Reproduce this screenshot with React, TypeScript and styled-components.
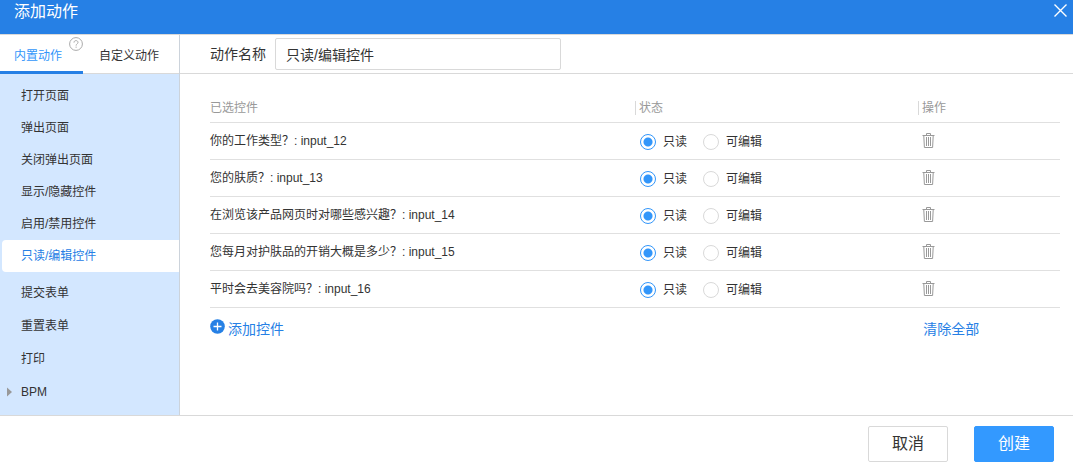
import React, { useState } from "react";
import styled, { createGlobalStyle, css } from "styled-components";

const GlobalStyle = createGlobalStyle`
  *, *::before, *::after { box-sizing: border-box; }
  body {
    margin: 0;
    background: #fff;
    color: #333;
    font: 12px/20px "Liberation Sans", "Noto Sans CJK SC", sans-serif;
  }
  button, input { font: inherit; color: inherit; }
  button { margin: 0; padding: 0; border: 0; background: none; cursor: pointer; }
`;

const Dialog = styled.div`
  display: flex;
  flex-direction: column;
  min-height: 100vh;
`;

const TitleBar = styled.header`
  display: flex;
  justify-content: space-between;
  align-items: flex-start;
  padding: 0 6px 10px 14px;
  background: #2680e5;
  color: #fff;
`;

const Title = styled.h1`
  margin: 0;
  font-size: 16px;
  font-weight: 400;
  line-height: 24px;
`;

const CloseButton = styled.button`
  display: flex;
  padding: 4px 0;
`;

const Body = styled.div`
  display: flex;
  flex: 1;
  border-top: 1px solid #d9d9d9;
  border-bottom: 1px solid #d9d9d9;
`;

const Sidebar = styled.aside`
  display: flex;
  flex-direction: column;
  flex: 0 0 180px;
  border-right: 1px solid #ccd3db;
`;

const Tabs = styled.div`
  display: flex;
  height: 39px;
  border-bottom: 1px solid #d9d9d9;
`;

const Tab = styled.button<{ $active?: boolean }>`
  position: relative;
  height: 39px;
  padding: 3px 16px 0;
  ${(p) =>
    p.$active &&
    css`
      padding: 3px 21px 0 14px;
      color: #3296fa;
      box-shadow: inset 0 -3px #2680e5;
    `}
`;

const HelpBadge = styled.span`
  position: absolute;
  top: 2px;
  right: 0;
  display: flex;
`;

const Menu = styled.nav`
  display: flex;
  flex-direction: column;
  flex: 1;
  padding: 6px 0 7px 2px;
  background: #d3e7ff;
`;

const MenuGroup = styled.div`
  display: flex;
  flex-direction: column;
  margin-bottom: 4px;
`;

const MenuItem = styled.button<{ $active?: boolean; $tall?: boolean }>`
  display: flex;
  align-items: center;
  height: ${(p) => (p.$tall ? 33 : 32)}px;
  padding-left: 5px;
  border-radius: 4px 0 0 4px;
  text-align: left;
  ${(p) =>
    p.$active &&
    css`
      background: #fff;
      color: #2680e5;
    `}
`;

const MenuMarker = styled.span`
  display: flex;
  width: 14px;
`;

const Main = styled.main`
  flex: 1;
  min-width: 0;
`;

const NameRow = styled.div`
  display: flex;
  align-items: center;
  gap: 9px;
  height: 39px;
  padding-left: 30px;
  border-bottom: 1px solid #d9d9d9;
  font-size: 14px;
`;

const NameInput = styled.input`
  width: 286px;
  height: 32px;
  padding: 0 10px;
  border: 1px solid #d9d9d9;
  border-radius: 2px;
  background: #fff;
  outline: none;
`;

const Content = styled.section`
  padding: 19px 13px 0 30px;
`;

const Table = styled.table`
  width: 100%;
  table-layout: fixed;
  border-collapse: separate;
  border-spacing: 0;
`;

const Column = styled.col<{ $share: string }>`
  width: ${(p) => p.$share};
`;

const HeadCell = styled.th`
  height: 30px;
  padding: 0;
  border-bottom: 1px solid #e0e0e0;
  color: #999;
  font-weight: 400;
  text-align: left;
`;

const HeadLabel = styled.span<{ $divided?: boolean }>`
  display: block;
  line-height: 14px;
  ${(p) =>
    p.$divided &&
    css`
      padding-left: 3px;
      border-left: 1px solid #d9d9d9;
    `}
`;

const Cell = styled.td`
  height: 37px;
  padding: 0 0 1px;
  border-bottom: 1px solid #e0e0e0;
`;

const Choices = styled.div`
  display: flex;
  align-items: center;
  gap: 16px;
  padding: 2px 0 0 5px;
`;

const Choice = styled.label`
  display: flex;
  align-items: center;
  gap: 7px;
`;

const Radio = styled.input`
  appearance: none;
  width: 16px;
  height: 16px;
  margin: 0;
  border: 1px solid #d9d9d9;
  border-radius: 50%;
  background: #fff;
  &:checked {
    border-color: #3296fa;
    background: radial-gradient(circle, #3296fa 4px, #fff 5px);
  }
`;

const DeleteButton = styled.button`
  display: flex;
  margin-left: 4px;
`;

const TableActions = styled.div`
  display: grid;
  grid-template-columns: 5fr 1fr;
  padding-top: 11px;
`;

const ActionLink = styled.button<{ $inset?: boolean }>`
  display: flex;
  justify-self: start;
  gap: 3px;
  padding-left: ${(p) => (p.$inset ? 5 : 0)}px;
  color: #2680e5;
  font-size: 14px;
`;

const Footer = styled.footer`
  display: flex;
  justify-content: flex-end;
  gap: 26px;
  padding: 10px 19px 5px;
`;

const FooterButton = styled.button<{ $primary?: boolean }>`
  width: 80px;
  height: 36px;
  border: 1px solid ${(p) => (p.$primary ? "#3399ff" : "#d9d9d9")};
  border-radius: 2px;
  background: ${(p) => (p.$primary ? "#3399ff" : "#fff")};
  color: ${(p) => (p.$primary ? "#fff" : "#333")};
  font-size: 16px;
`;

const CloseIcon = () => (
  <svg width="13" height="13" viewBox="0 0 13 13" fill="none" stroke="#fff" strokeWidth="1.4">
    <path d="M0.5 0.5 12.5 12.5M12.5 0.5 0.5 12.5" />
  </svg>
);

const HelpIcon = () => (
  <svg width="14" height="14" viewBox="0 0 14 14" fill="none" stroke="#aaa" strokeWidth="1">
    <circle cx="7" cy="7" r="6.4" />
    <path d="M5 5.6C5 4.2 5.9 3.6 7 3.6s2 .7 2 1.8C9 6.8 7.1 6.9 7.1 8.6M7.1 9.6v1.2" />
  </svg>
);

const TrashIcon = () => (
  <svg width="13" height="16" viewBox="0 0 13 16" fill="none" stroke="#999" strokeWidth="1">
    <path d="M0.5 2.5h12M4.5 2.5v-2h4v2" />
    <path d="M1.8 3l.6 11.5h8.2L11.2 3M4.5 4v9M6.5 4v9M8.5 4v9" />
  </svg>
);

const PlusIcon = () => (
  <svg width="15" height="15" viewBox="0 0 15 15">
    <circle cx="7.5" cy="7.5" r="7.3" fill="#2680e5" />
    <path d="M7.5 3.5v8M3.5 7.5h8" stroke="#fff" strokeWidth="1.3" />
  </svg>
);

const ArrowIcon = () => (
  <svg width="5" height="10" viewBox="0 0 5 10">
    <path d="M0 0.5 5 5 0 9.5z" fill="#999" />
  </svg>
);

const controlActions = ["打开页面", "弹出页面", "关闭弹出页面", "显示/隐藏控件", "启用/禁用控件", "只读/编辑控件"];
const formActions = ["提交表单", "重置表单", "打印", "BPM"];

const initialControls = [
  { id: "input_12", label: "你的工作类型？" },
  { id: "input_13", label: "您的肤质？" },
  { id: "input_14", label: "在浏览该产品网页时对哪些感兴趣？" },
  { id: "input_15", label: "您每月对护肤品的开销大概是多少？" },
  { id: "input_16", label: "平时会去美容院吗？" },
];

export default function App() {
  const [controls, setControls] = useState(initialControls);
  const [selected, setSelected] = useState("只读/编辑控件");

  return (
    <>
      <GlobalStyle />
      <Dialog role="dialog" aria-labelledby="dialog-title">
        <TitleBar>
          <Title id="dialog-title">添加动作</Title>
          <CloseButton type="button" aria-label="关闭">
            <CloseIcon />
          </CloseButton>
        </TitleBar>
        <Body>
          <Sidebar>
            <Tabs role="tablist">
              <Tab type="button" role="tab" aria-selected="true" $active>
                内置动作
                <HelpBadge>
                  <HelpIcon />
                </HelpBadge>
              </Tab>
              <Tab type="button" role="tab" aria-selected="false">
                自定义动作
              </Tab>
            </Tabs>
            <Menu>
              <MenuGroup>
                {controlActions.map((name) => (
                  <MenuItem key={name} type="button" $active={name === selected} onClick={() => setSelected(name)}>
                    <MenuMarker />
                    {name}
                  </MenuItem>
                ))}
              </MenuGroup>
              {formActions.map((name) => (
                <MenuItem key={name} type="button" $tall $active={name === selected} onClick={() => setSelected(name)}>
                  <MenuMarker>{name === "BPM" && <ArrowIcon />}</MenuMarker>
                  {name}
                </MenuItem>
              ))}
            </Menu>
          </Sidebar>
          <Main>
            <NameRow>
              <label htmlFor="action-name">动作名称</label>
              <NameInput id="action-name" type="text" defaultValue="只读/编辑控件" />
            </NameRow>
            <Content>
              <Table>
                <colgroup>
                  <Column $share="50%" />
                  <Column $share="33.3%" />
                  <Column $share="16.7%" />
                </colgroup>
                <thead>
                  <tr>
                    <HeadCell scope="col">
                      <HeadLabel>已选控件</HeadLabel>
                    </HeadCell>
                    <HeadCell scope="col">
                      <HeadLabel $divided>状态</HeadLabel>
                    </HeadCell>
                    <HeadCell scope="col">
                      <HeadLabel $divided>操作</HeadLabel>
                    </HeadCell>
                  </tr>
                </thead>
                <tbody>
                  {controls.map(({ id, label }) => (
                    <tr key={id}>
                      <Cell>{`${label}: ${id}`}</Cell>
                      <Cell>
                        <Choices>
                          <Choice>
                            <Radio type="radio" name={id} value="readonly" defaultChecked />
                            只读
                          </Choice>
                          <Choice>
                            <Radio type="radio" name={id} value="editable" />
                            可编辑
                          </Choice>
                        </Choices>
                      </Cell>
                      <Cell>
                        <DeleteButton
                          type="button"
                          aria-label="删除"
                          onClick={() => setControls(controls.filter((c) => c.id !== id))}
                        >
                          <TrashIcon />
                        </DeleteButton>
                      </Cell>
                    </tr>
                  ))}
                </tbody>
              </Table>
              <TableActions>
                <ActionLink type="button">
                  <PlusIcon />
                  添加控件
                </ActionLink>
                <ActionLink type="button" $inset onClick={() => setControls([])}>
                  清除全部
                </ActionLink>
              </TableActions>
            </Content>
          </Main>
        </Body>
        <Footer>
          <FooterButton type="button">取消</FooterButton>
          <FooterButton type="button" $primary>
            创建
          </FooterButton>
        </Footer>
      </Dialog>
    </>
  );
}
